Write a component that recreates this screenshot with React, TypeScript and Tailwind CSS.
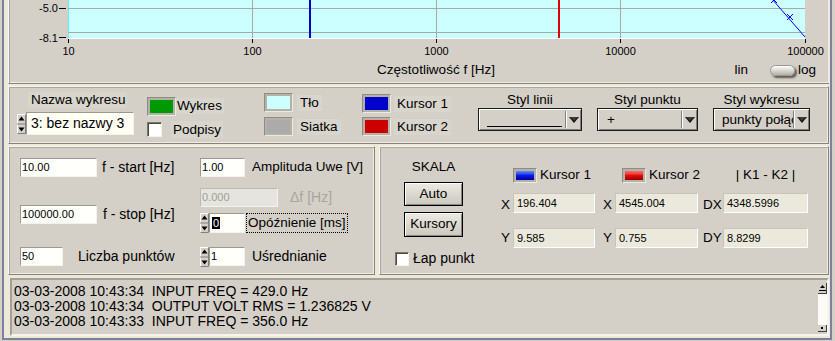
import React from "react";

const panel =
  "bg-[#d4d0c8] border border-t-[#f8f6f0] border-l-[#f8f6f0] border-b-[#85827a] border-r-[#85827a] shadow-[inset_1px_1px_0_#aaa79e,inset_-1px_-1px_0_#eeece5]";

const sunken =
  "border border-t-[#9c998f] border-l-[#9c998f] border-b-[#f4f2ec] border-r-[#f4f2ec]";

const Spinner = () => (
  <svg width="9" height="20" viewBox="0 0 9 20" className="block shrink-0">
    <rect x="0" y="0" width="9" height="20" fill="#d4d0c8" />
    <path d="M0.5 19.5V0.5H8.5" stroke="#fff" fill="none" />
    <path d="M0.5 19.5H8.5V0.5" stroke="#808080" fill="none" />
    <line x1="0" y1="10" x2="9" y2="10" stroke="#808080" />
    <path d="M4.5 2.5L7.5 6.5H1.5Z" fill="#000" />
    <path d="M4.5 17.5L7.5 13.5H1.5Z" fill="#000" />
  </svg>
);

const Checkbox = ({ className = "" }: { className?: string }) => (
  <div
    className={`shrink-0 bg-white border border-t-[#7a776e] border-l-[#7a776e] border-b-[#f4f2ec] border-r-[#f4f2ec] shadow-[inset_1px_1px_0_#4a4840] ${className}`}
  />
);

const Swatch = ({ fill }: { fill: string }) => (
  <div className="w-[29px] h-[19px] shrink-0 p-[2px] bg-[#b4b1a8] border border-t-[#8f8c83] border-l-[#8f8c83] border-b-[#ebe9e2] border-r-[#ebe9e2]">
    <div className={`w-full h-full ${fill}`} />
  </div>
);

const Arrow = () => (
  <svg width="10" height="6" viewBox="0 0 10 6" className="block">
    <path d="M0 0H10L5 6Z" fill="#111" />
    <path d="M1 0H9L5 4Z" fill="#3a3a3a" />
  </svg>
);

const Dropdown = ({
  className,
  children,
}: {
  className: string;
  children: React.ReactNode;
}) => (
  <div
    className={`h-[23px] flex border border-[#1a1a1a] bg-[#d4d0c8] shadow-[inset_1px_1px_0_#fff,inset_-1px_-1px_0_#808080] ${className}`}
  >
    <div className="flex-1 min-w-0 overflow-hidden whitespace-nowrap flex">{children}</div>
    <div className="w-[1px] my-[2px] bg-[#808080]" />
    <div className="w-[1px] my-[2px] bg-white" />
    <div className="w-[14px] flex items-center justify-center">
      <Arrow />
    </div>
  </div>
);

const Num = ({ className, children }: { className: string; children: React.ReactNode }) => (
  <div
    className={`h-[19px] bg-[#fffffb] ${sunken} pl-[1px] text-[11px] leading-[17px] whitespace-nowrap ${className}`}
  >
    {children}
  </div>
);

const Readout = ({ className, children }: { className: string; children: React.ReactNode }) => (
  <div
    className={`h-[20px] bg-[#ebe9dc] border border-t-[#c7c4ba] border-l-[#c7c4ba] border-b-white border-r-white pl-[3px] text-[11px] leading-[18px] ${className}`}
  >
    {children}
  </div>
);

const Led = ({ fill }: { fill: string }) => (
  <div className="w-[24px] h-[15px] shrink-0 p-[2px] bg-[#b4b1a8] border border-t-[#8f8c83] border-l-[#8f8c83] border-b-[#ebe9e2] border-r-[#ebe9e2]">
    <div className={`w-full h-full ${fill}`} />
  </div>
);

const Button = ({ className, children }: { className: string; children: React.ReactNode }) => (
  <div
    className={`border border-black bg-gradient-to-b from-[#eceae2] to-[#cbc7bd] shadow-[inset_1px_1px_0_#fff,inset_-1px_-1px_0_#8a877e] flex items-center justify-center ${className}`}
  >
    {children}
  </div>
);

const decades = [68, 252, 436, 620, 805];
const decadeLabels = ["10", "100", "1000", "10000", "100000"];

function Plot() {
  return (
    <svg width="819" height="58" viewBox="9 0 819 58" className="block">
      <rect x="68" y="-1" width="737" height="39" fill="#ccffff" />
      <line x1="68.5" y1="0" x2="68.5" y2="38" stroke="#66eeff" />
      <line x1="68" y1="38.5" x2="805" y2="38.5" stroke="#ffffff" />
      <line x1="68" y1="8.5" x2="805" y2="8.5" stroke="#a9a9a9" />
      <line x1="68" y1="32.5" x2="805" y2="32.5" stroke="#a9a9a9" />
      {[252.5, 436.5, 620.5].map((x) => (
        <line key={x} x1={x} y1="0" x2={x} y2="38" stroke="#a9a9a9" />
      ))}
      <rect x="309" y="0" width="2" height="38" fill="#0000cc" />
      <rect x="558" y="0" width="2" height="38" fill="#dd0000" />
      <polyline points="772,-1 805,37" stroke="#0000ff" fill="none" />
      <path d="M787 14L793 20M787 20L793 14" stroke="#0000ff" />
      <path d="M771 -3L777 3M771 3L777 -3" stroke="#0000ff" />
      <line x1="59" y1="8.5" x2="66" y2="8.5" stroke="#000" />
      <line x1="59" y1="37.5" x2="66" y2="37.5" stroke="#000" />
      <g fontFamily="'Liberation Sans', Arial, sans-serif" fontSize="11" fill="#000">
        <text x="58" y="12" textAnchor="end">-5.0</text>
        <text x="58" y="41.5" textAnchor="end">-8.1</text>
        {decades.map((x, i) => (
          <React.Fragment key={x}>
            <line x1={x + 0.5} y1="39" x2={x + 0.5} y2="43" stroke="#000" />
            <text x={x + 0.5} y="55" textAnchor="middle">
              {decadeLabels[i]}
            </text>
          </React.Fragment>
        ))}
      </g>
    </svg>
  );
}

export default function App() {
  return (
    <div className="w-[835px] h-[341px] overflow-hidden bg-[#d4d0c8] pl-[2px] pr-[3px] pb-[1px] font-['Liberation_Sans',Arial,sans-serif] text-black">
      <div className="h-full border-x-2 border-b-2 border-[#7f809c] bg-[#ece9d8] pl-[4px] pr-[1px] flex flex-col">
        {/* graph */}
        <div className="h-[84px] shrink-0 flex flex-col bg-[#d4d0c8] border-l border-b border-l-[#f8f6f0] border-b-[#85827a] shadow-[inset_1px_0_0_#aaa79e,inset_-1px_-1px_0_#eeece5]">
          <Plot />
          <div className="h-[24px] ml-[59px] w-[748px] grid items-center text-[13.5px]">
            <div className="col-start-1 row-start-1 text-center pr-[12px]">Częstotliwość f [Hz]</div>
            <div className="col-start-1 row-start-1 justify-self-end flex items-center">
              <span>lin</span>
              <div className="ml-[22px] w-[25px] h-[11px] rounded-full bg-gradient-to-b from-white to-[#b4b1a8] border border-[#9c998f] shadow-[2px_2px_2px_#5c5a54]" />
              <span className="ml-[3px]">log</span>
            </div>
          </div>
        </div>

        {/* settings row */}
        <div className={`${panel} mt-[2px] h-[58px] shrink-0 flex items-start text-[13.5px]`}>
          <div className="ml-[8px] w-[117px] flex flex-col">
            <div className="ml-[11px] mt-[5px] w-[99px] h-[16px] leading-[16px] pl-[3px] bg-[#d8d5cd]">
              Nazwa wykresu
            </div>
            <div className="mt-[4px] flex items-center">
              <Spinner />
              <div className={`w-[108px] h-[23px] bg-[#fffff4] ${sunken} pl-[4px] leading-[21px] text-[14px] whitespace-nowrap overflow-hidden`}>
                3: bez nazwy 3
              </div>
            </div>
          </div>

          <div className="ml-[13px] w-[77px] flex flex-col">
            <div className="mt-[10px] flex items-start">
              <Swatch fill="bg-[#009900]" />
              <div className="mt-[1px] h-[16px] leading-[16px] bg-[#d8d5cd] w-[48px] pl-[1px]">Wykres</div>
            </div>
            <div className="mt-[5px] flex items-center">
              <Checkbox className="w-[15px] h-[15px]" />
              <div className="ml-[9px] h-[17px] leading-[17px] bg-[#d8d5cd] px-[2px]">Podpisy</div>
            </div>
          </div>

          <div className="ml-[40px] w-[98px] flex flex-col">
            <div className="mt-[6px] flex items-center">
              <Swatch fill="bg-[#ccffff]" />
              <div className="ml-[4px] h-[16px] leading-[16px] bg-[#d8d5cd] px-[3px]">Tło</div>
            </div>
            <div className="mt-[5px] flex items-center">
              <Swatch fill="bg-[#ababab]" />
              <div className="ml-[4px] h-[16px] leading-[16px] bg-[#d8d5cd] px-[3px]">Siatka</div>
            </div>
          </div>

          <div className="w-[116px] flex flex-col">
            <div className="mt-[7px] flex items-center">
              <Swatch fill="bg-[#0000cc]" />
              <div className="ml-[3px] h-[16px] leading-[16px] bg-[#d8d5cd] px-[3px]">Kursor 1</div>
            </div>
            <div className="mt-[4px] flex items-center">
              <Swatch fill="bg-[#cc0000]" />
              <div className="ml-[3px] h-[16px] leading-[16px] bg-[#d8d5cd] px-[3px]">Kursor 2</div>
            </div>
          </div>

          <div className="w-[104px] flex flex-col items-center">
            <div className="mt-[5px] h-[16px] leading-[16px]">Styl linii</div>
            <Dropdown className="w-[104px]">
              <div className="ml-[8px] mt-[17px] w-[75px] h-[1px] bg-black" />
            </Dropdown>
          </div>

          <div className="ml-[15px] w-[101px] flex flex-col items-center">
            <div className="mt-[5px] h-[16px] leading-[16px]">Styl punktu</div>
            <Dropdown className="w-[101px]">
              <span className="pl-[9px] leading-[21px]">+</span>
            </Dropdown>
          </div>

          <div className="ml-[15px] w-[97px] flex flex-col items-center">
            <div className="mt-[5px] h-[16px] leading-[16px]">Styl wykresu</div>
            <Dropdown className="w-[97px]">
              <span className="pl-[8px] leading-[21px]">punkty połąc</span>
            </Dropdown>
          </div>
        </div>

        {/* controls */}
        <div className="mt-[2px] h-[129px] shrink-0 flex gap-[4px] text-[13.5px]">
          <div className={`${panel} w-[367px] h-full flex text-[14px]`}>
            <div className="ml-[11px] w-[180px] flex flex-col">
              <div className="mt-[11px] flex items-center h-[19px]">
                <Num className="w-[77px]">10.00</Num>
                <span className="ml-[5px]">f - start [Hz]</span>
              </div>
              <div className="mt-[28px] flex items-center h-[19px]">
                <Num className="w-[77px]">100000.00</Num>
                <span className="ml-[6px]">f - stop [Hz]</span>
              </div>
              <div className="mt-[23px] flex items-center h-[19px]">
                <Num className="w-[43px]">50</Num>
                <span className="ml-[15px]">Liczba punktów</span>
              </div>
            </div>
            <div className="flex flex-col">
              <div className="mt-[11px] flex items-center h-[19px]">
                <Num className="w-[45px]">1.00</Num>
                <span className="ml-[7px] text-[13.5px]">Amplituda Uwe [V]</span>
              </div>
              <div className="mt-[11px] flex items-center h-[19px]">
                <div className="w-[78px] h-[19px] bg-[#e6e4de] border border-t-[#bcb9b0] border-l-[#bcb9b0] border-b-[#f4f2ec] border-r-[#f4f2ec] pl-[1px] text-[11px] leading-[17px] text-[#a19e96]">
                  0.000
                </div>
                <span className="ml-[12px] text-[#a8a59d]">Δf [Hz]</span>
              </div>
              <div className="mt-[6px] flex items-center h-[20px]">
                <Spinner />
                <div className={`w-[36px] h-[20px] bg-[#fffffb] ${sunken} pl-[2px] text-[11px] leading-[18px]`}>
                  <span className="bg-black text-white px-[1px]">0</span>
                </div>
                <div className="ml-[1px] h-[20px] leading-[18px] border border-dotted border-black px-[1px] text-[13.5px]">
                  Opóźnienie [ms]
                </div>
              </div>
              <div className="mt-[14px] flex items-center h-[19px]">
                <Spinner />
                <Num className="w-[36px]">1</Num>
                <span className="ml-[7px]">Uśrednianie</span>
              </div>
            </div>
          </div>

          <div className={`${panel} flex-1 h-full flex`}>
            <div className="ml-[15px] w-[85px] flex flex-col">
              <div className="ml-[9px] mt-[12px] w-[59px] h-[16px] leading-[16px] text-center">SKALA</div>
              <Button className="ml-[9px] mt-[7px] w-[59px] h-[24px]">Auto</Button>
              <Button className="ml-[9px] mt-[6px] w-[59px] h-[25px]">Kursory</Button>
              <div className="mt-[11px] flex items-center">
                <Checkbox className="w-[14px] h-[14px]" />
                <span className="ml-[4px] text-[14px]">Łap punkt</span>
              </div>
            </div>

            <div className="ml-[21px] flex">
              <div className="w-[94px] flex flex-col">
                <div className="mt-[21px] h-[15px] flex items-center whitespace-nowrap">
                  <div className="ml-[12px]" />
                  <Led fill="bg-gradient-to-b from-[#6a82ff] via-[#0a1ae6] to-[#00009a]" />
                  <span className="ml-[3px]">Kursor 1</span>
                </div>
                <div className="mt-[10px] h-[20px] flex items-center">
                  <span className="w-[12px] pt-[5px]">X</span>
                  <Readout className="w-[82px]">196.404</Readout>
                </div>
                <div className="mt-[15px] h-[20px] flex items-center">
                  <span className="w-[12px]">Y</span>
                  <Readout className="w-[82px]">9.585</Readout>
                </div>
              </div>

              <div className="ml-[8px] w-[95px] flex flex-col">
                <div className="mt-[21px] h-[15px] flex items-center whitespace-nowrap">
                  <div className="ml-[19px]" />
                  <Led fill="bg-gradient-to-b from-[#ff6a6a] via-[#e60a0a] to-[#9a0000]" />
                  <span className="ml-[3px] shrink-0">Kursor 2</span>
                </div>
                <div className="mt-[10px] h-[20px] flex items-center">
                  <span className="w-[12px] pt-[5px]">X</span>
                  <Readout className="w-[83px]">4545.004</Readout>
                </div>
                <div className="mt-[15px] h-[20px] flex items-center">
                  <span className="w-[12px]">Y</span>
                  <Readout className="w-[83px]">0.755</Readout>
                </div>
              </div>

              <div className="ml-[5px] w-[105px] flex flex-col">
                <div className="mt-[21px] h-[15px] flex items-center justify-center pl-[20px] whitespace-nowrap">| K1 - K2 |</div>
                <div className="mt-[10px] h-[20px] flex items-center">
                  <span className="w-[20px] pt-[5px]">DX</span>
                  <Readout className="w-[85px]">4348.5996</Readout>
                </div>
                <div className="mt-[15px] h-[20px] flex items-center">
                  <span className="w-[20px]">DY</span>
                  <Readout className="w-[85px]">8.8299</Readout>
                </div>
              </div>
            </div>
          </div>
        </div>

        {/* log */}
        <div className="mt-[3px] ml-[2px] h-[58px] shrink-0 flex bg-[#d4d0c8] border-2 border-t-[#a3a097] border-l-[#a3a097] border-b-[#f6f4ee] border-r-[#f6f4ee]">
          <div className="flex-1 pl-[2px] pt-[4px] text-[14px] leading-[15px] whitespace-pre">
            <div>03-03-2008 10:43:34  INPUT FREQ = 429.0 Hz</div>
            <div>03-03-2008 10:43:34  OUTPUT VOLT RMS = 1.236825 V</div>
            <div>03-03-2008 10:43:33  INPUT FREQ = 356.0 Hz</div>
          </div>
          <div className="w-[9px] mt-[3px] mb-[2px] flex flex-col justify-between bg-[#fcfcf7]">
            <div className="h-[11px] bg-[#d4d0c8] border-r border-b border-[#404040] flex flex-col items-center pt-[2px]">
              <svg width="5" height="3" viewBox="0 0 5 3" className="block">
                <path d="M2.5 0L5 3H0Z" fill="#000" />
              </svg>
              <div className="mt-[2px] w-[7px] h-[1px] bg-black" />
            </div>
            <div className="h-[7px] bg-[#d4d0c8] border-r border-b border-[#404040] flex items-center justify-center">
              <div className="w-[2px] h-[2px] bg-black" />
            </div>
          </div>
        </div>
      </div>
    </div>
  );
}
